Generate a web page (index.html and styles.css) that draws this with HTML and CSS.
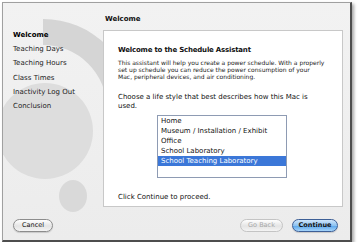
FILE: index.html
```html
<!DOCTYPE html>
<html lang="en">
<head>
  <meta charset="UTF-8">
  <meta name="viewport" content="width=device-width, initial-scale=1.0">
  <title>Schedule Assistant</title>
  <link rel="stylesheet" href="styles.css">
</head>
<body>
  <div class="window">
    <!-- faint watermark logo behind the sidebar -->
    <svg class="watermark" viewBox="0 0 130 240" width="130" height="240">
      <path d="M 40 16 A 90 90 0 0 1 130 106 L 104 106 A 64 64 0 0 0 40 42 Z" fill="#d5d5d5" />
      <circle cx="42" cy="128" r="48" fill="#dddddd" />
      <ellipse cx="70" cy="193" rx="14" ry="16" fill="#d9d9d9" />
    </svg>

    <div class="titlebar">Welcome</div>

    <div class="main">
      <ul class="steps">
        <li class="current">Welcome</li>
        <li>Teaching Days</li>
        <li>Teaching Hours</li>
        <li>Class Times</li>
        <li>Inactivity Log Out</li>
        <li>Conclusion</li>
      </ul>

      <div class="panel">
        <h1>Welcome to the Schedule Assistant</h1>
        <p class="intro">This assistant will help you create a power schedule. With a properly<br>set up schedule you can reduce the power consumption of your<br>Mac, peripheral devices, and air conditioning.</p>
        <p class="question">Choose a life style that best describes how this Mac is used.</p>
        <ul class="listbox">
          <li>Home</li>
          <li>Museum / Installation / Exhibit</li>
          <li>Office</li>
          <li>School Laboratory</li>
          <li class="selected">School Teaching Laboratory</li>
        </ul>
        <p class="hint">Click Continue to proceed.</p>
      </div>
    </div>

    <div class="footer">
      <button class="btn">Cancel</button>
      <div class="spacer"></div>
      <button class="btn" disabled>Go Back</button>
      <button class="btn primary">Continue</button>
    </div>
  </div>
</body>
</html>
```

FILE: styles.css
```css
* {
  margin: 0;
  padding: 0;
  box-sizing: border-box;
}

body {
  font-family: 'DejaVu Sans', 'Liberation Sans', sans-serif;
  background: #ffffff;
  color: #111;
  padding: 2px 0 0 2px;
}

.window {
  position: relative;
  width: 350px;
  height: 240px;
  display: flex;
  flex-direction: column;
  background: linear-gradient(#f2f2f2 0%, #ececec 100%);
  border: 1px solid #a0a0a0;
  border-right: 2px solid #4e4e4e;
  border-bottom: 2px solid #4e4e4e;
  box-shadow: 2px 2px 3px rgba(0, 0, 0, 0.35);
  overflow: hidden;
}

.watermark {
  position: absolute;
  left: 0;
  top: 0;
}

.titlebar {
  position: relative;
  height: 27px;
  padding: 12px 0 0 102px;
  font-size: 7px;
  font-weight: bold;
  line-height: 8px;
}

.main {
  position: relative;
  display: flex;
  height: 177px;
}

.steps {
  list-style: none;
  width: 100px;
  margin-top: -2px;
  padding-left: 10px;
  font-size: 7px;
  line-height: 14.2px;
  color: #222;
}

.steps .current {
  font-weight: bold;
  color: #000;
}

.panel {
  flex: 1;
  margin-right: 7px;
  background: #ffffff;
  border: 1px solid #c8c8c8;
  padding: 15px 14px 0 14px;
}

.panel h1 {
  font-size: 7px;
  font-weight: bold;
  letter-spacing: -0.2px;
  line-height: 9px;
}

.intro {
  margin-top: 4px;
  font-size: 6px;
  line-height: 7px;
  color: #222;
  white-space: nowrap;
}

.question {
  margin-top: 13px;
  font-size: 7px;
  line-height: 9px;
  width: 200px;
}

.listbox {
  list-style: none;
  margin: 4px 0 0 39px;
  width: 130px;
  height: 63px;
  border: 1px solid #8e9bb3;
  font-size: 7px;
  line-height: 10px;
}

.listbox li {
  padding-left: 3px;
  white-space: nowrap;
}

.listbox .selected {
  background: #3b77d8;
  color: #ffffff;
}

.hint {
  margin-top: 15px;
  font-size: 7px;
  line-height: 9px;
}

.footer {
  position: relative;
  display: flex;
  align-items: flex-start;
  gap: 9px;
  height: 33px;
  padding: 12px 12px 0 10px;
}

.spacer {
  flex: 1;
}

.btn {
  height: 13px;
  padding: 0;
  border: 1px solid #8c8c8c;
  border-radius: 7px;
  background: linear-gradient(#ffffff 0%, #e4e4e4 55%, #f4f4f4 100%);
  font-family: 'DejaVu Sans', 'Liberation Sans', sans-serif;
  font-size: 6.5px;
  line-height: 11px;
  color: #111;
  white-space: nowrap;
  box-shadow: 0 1px 1px rgba(0, 0, 0, 0.15);
}

.btn:first-child {
  width: 40px;
}

.btn[disabled] {
  width: 43px;
  color: #a8a8a8;
  border-color: #c4c4c4;
  box-shadow: none;
}

.btn.primary {
  width: 46px;
  font-weight: bold;
  border-color: #3d5f96;
  background: linear-gradient(#cfe6fb 0%, #8ec3f2 50%, #5ea8ec 55%, #a6d4fa 100%);
}
```
